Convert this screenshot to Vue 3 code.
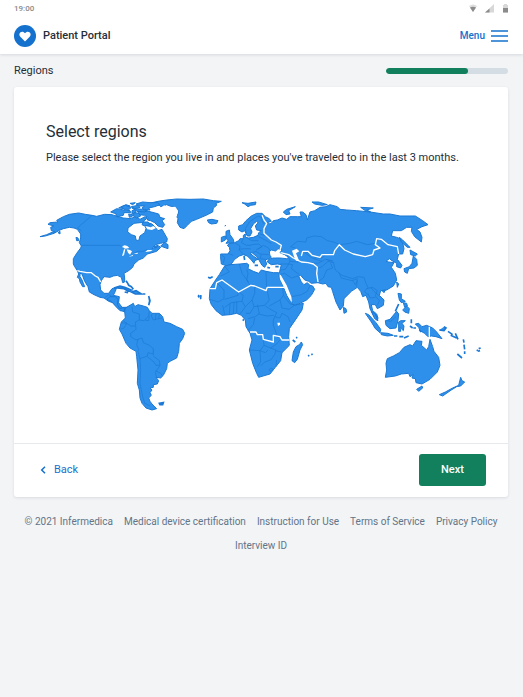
<script setup>
import { ref } from 'vue'

const progress = ref(67)
const links = ['Medical device certification', 'Instruction for Use', 'Terms of Service', 'Privacy Policy', 'Interview ID']
</script>

<template>
  <div class="page">
    <header class="top">
      <div class="status">
        <span>19:00</span>
        <svg class="status-icons" viewBox="0 0 42 12" aria-hidden="true">
          <path d="M1 3Q5 0 9 3L5 9Z" fill="#ddd" />
          <path d="M2 4.500Q5 3 8 4.500L5 9Z" fill="#8b8b8b" />
          <path d="M26 1V9.500H17Z" fill="#d8d8d8" />
          <path d="M21.500 5.500V9.500H17Z" fill="#8b8b8b" />
          <path d="M36 1H39V2H40V9.500H35V2H36Z" fill="#d8d8d8" />
          <path d="M35 5H40V9.500H35Z" fill="#8b8b8b" />
        </svg>
      </div>
      <div class="bar">
        <a class="brand" href="#">
          <svg class="logo" viewBox="0 0 22 22" aria-hidden="true">
            <circle cx="11" cy="11" r="11" fill="#1471cd" />
            <path d="M11 16.400L6.300 11.700C4.900 10.200 5.100 8.200 6.500 7.200C8 6.200 10 6.700 11 8.300C12 6.700 14 6.200 15.500 7.200C16.900 8.200 17.100 10.200 15.700 11.700Z" fill="#fff" />
          </svg>
          <span>Patient Portal</span>
        </a>
        <button class="menu" type="button">
          <span>Menu</span>
          <svg class="burger" viewBox="0 0 17 12" aria-hidden="true">
            <path d="M0 1H17M0 6H17M0 11H17" stroke="#1471cd" stroke-width="1.300" />
          </svg>
        </button>
      </div>
    </header>

    <main class="content">
      <div class="step">
        <span>Regions</span>
        <div class="track" role="progressbar" aria-label="Interview progress" :aria-valuenow="progress">
          <div class="fill" :style="{ width: progress + '%' }"></div>
        </div>
      </div>

      <section class="card">
        <div class="intro">
          <h1>Select regions</h1>
          <p>Please select the region you live in and places you've traveled to in the last 3 months.</p>
        </div>

        <svg class="map" viewBox="117 594 1332 640" role="img" aria-label="World map">
          <!-- North America and Greenland -->
          <g transform="translate(90 570)">
            <path class="land" d="M30 140L50 134L66 127L76 126L64 122L62 112L72 108L54 103L60 98L84 96L80 91L100 80L118 73L146 69L166 73L186 76L200 79L224 73L246 74L262 80L280 84L300 86L318 80L330 88L345 80L352 84L340 94L345 98L330 98L312 100L294 114L293 126L304 134L316 138L318 150L326 152L330 138L344 128L348 116L345 106L352 98L366 102L374 110L384 122L396 118L404 132L412 146L410 156L392 160L376 164L366 176L386 168L392 172L380 184L366 188L352 192L340 204L326 210L312 222L308 232L296 242L282 250L284 264L284 276L278 278L274 262L262 256L250 258L240 262L222 260L214 272L210 284L212 300L222 310L236 310L246 296L260 292L256 304L250 316L268 320L266 338L276 352L290 352L298 362L284 366L270 358L258 346L248 338L236 334L222 324L210 322L192 314L178 306L174 290L164 274L156 252L150 250L150 260L156 270L160 280L164 290L158 290L150 276L148 266L142 262L146 252L142 242L134 230L130 222L130 206L140 190L152 174L154 168L148 158L152 144L152 132L142 118L132 114L118 112L100 116L90 120L72 130L46 138Z" />
            <path class="land" d="M358 40L384 34L410 30L440 27L480 28L520 27L550 32L574 34L558 40L560 46L550 54L548 66L528 76L500 88L484 94L472 106L462 116L450 112L442 98L444 86L440 80L446 66L438 52L420 48L410 44L392 50L388 46L370 44Z" />
            <path class="land" d="M318 42L338 36L360 38L382 38L390 44L374 50L356 54L360 60L344 60L336 54L344 48L330 48ZM266 54L288 44L300 48L286 56ZM300 40L316 38L308 44ZM242 66L260 56L282 60L300 62L302 68L282 68L280 76L264 80L256 76L260 72ZM306 62L316 58L318 68L306 72ZM322 62L346 62L364 66L386 72L390 82L404 86L396 92L404 104L398 112L384 108L374 98L362 92L352 90L354 82L344 76L328 74ZM340 96L354 96L360 104L344 108L336 104ZM392 168L404 158L414 164L414 176L402 172ZM370 170L384 166L378 174ZM138 142L144 144L146 152L140 152ZM84 128L90 124L90 132ZM304 50L324 46L330 52L314 56Z" />
            <path class="land" d="M274 50L286 46L304 52L298 58L282 58ZM306 54L320 56L338 58L352 62L344 66L322 64ZM312 68L326 70L332 78L320 84L310 78ZM296 72L308 74L306 80L298 82Z" />
            <path class="water" d="M274 170L284 166L292 168L298 174L286 176ZM282 178L286 178L282 196L276 198ZM290 178L300 180L306 184L300 194L294 188ZM296 200L310 194L308 198ZM310 190L324 188L322 192ZM346 108L362 112L370 108L378 114L366 120L352 118ZM368 180L352 180L346 186L362 184ZM388 58L402 46L416 52L436 50L444 62L440 80L428 78L412 82L400 72Z" />
            <path class="border" d="M186 76L142 114L154 122M154 166H268L280 172M310 190L324 184H340L352 178M224 324L236 314L244 318L246 334L266 338" />
            <path class="region" d="M142 242L150 244L170 248H184L196 258L204 262L212 276" />
            <path class="island" d="M252 294L270 288L284 292L304 300L296 304L282 296L262 294ZM304 306L318 302L334 312L316 312ZM284 306L294 308M338 312H346M288 272L292 278L296 286L304 290L310 298M356 318L360 332L356 346" />
          </g>

          <!-- Central and South America -->
          <g transform="translate(330 870)">
            <path class="land" d="M0 20L16 20L24 28L22 44L30 56L42 52L44 64L30 62L18 50L4 34L-10 28Z" />
            <path class="land" d="M44 64L46 54L60 46L70 40L74 50L84 44L100 48L112 52L118 62L126 70L148 70L158 80L162 96L180 100L200 110L218 118L224 130L218 146L208 160L206 184L200 204L180 214L172 220L170 236L160 256L152 264L138 262L146 272L142 282L130 284L130 292L120 294L126 300L120 308L124 316L116 324L120 334L126 342L140 356L126 360L108 354L96 340L90 324L88 300L82 280L84 240L80 200L78 184L60 174L48 160L36 132L28 118L34 96L46 84Z" />
            <path class="island" d="M148 340L160 338L158 344L150 344ZM264 18L268 16M270 26L274 24M272 16V20" />
            <path class="border" d="M34 98L50 100L62 108H76M40 92L50 100L42 114L32 118M76 120L62 130V140L78 150L84 148L96 144L100 158L118 166L130 176V194M84 148L80 164L86 178L84 184L90 206L112 198L114 188L130 192M112 200L132 216L138 226H150L148 212L130 198M150 226L136 248L140 262M136 242L152 250L158 258M90 206L92 240L90 280L98 320L104 340L120 348M66 50L68 66L88 72V90L76 96L78 120M88 90L102 92L116 78L118 62M126 72L124 78L130 90L146 86L156 84M138 72L136 88M148 72L146 86M118 78L116 92L104 90" />
          </g>

          <!-- Europe, Asia and Africa -->
          <g transform="translate(570 570)">
            <path class="land" d="M92 192V204L94 222L106 226L112 228L124 222L134 208L148 198L160 194L172 198L184 210L192 220L194 212L204 208L190 198L180 190L186 188L200 200L208 212L216 226L224 232L230 222L226 210L236 206L244 202L240 196L238 184L244 180L256 184L264 176L276 180L270 188L284 194L296 202L290 206L270 204L250 204L236 208L232 216L244 224L262 222L274 224L270 240L268 252L272 268L284 290L300 320L306 340L312 346L330 340L350 330L364 316L374 298L368 288L360 286L352 278L342 284L334 276L326 258L332 256L344 270L356 274L364 280L384 278L398 282L408 280L414 290L424 292L428 305L438 336L450 360L460 348L462 326L484 304L502 292L512 304L518 320L528 316L536 336L540 356L550 376L562 392L564 384L560 372L548 362L544 344L556 344L562 356L580 346L582 330L568 316L572 302L590 300L610 288L620 270L616 250L604 232L612 218L596 216L588 214L598 206L606 212L620 220V230L632 234L636 226L622 208L626 192L638 192L642 176L638 158L630 146L620 142L604 138L608 122L634 122L650 112L666 112L664 124L674 140L694 156L696 142L690 126L680 118L696 110L714 104L698 92L676 78L630 78L600 72L580 72L540 66L500 62L470 60L450 58L442 50L420 44L408 50L390 52L374 62L360 66L356 78L352 90L348 74L338 66L330 66L334 80L322 80L300 80L290 88L276 84L262 90L250 92L246 98L240 102L232 98L244 94L238 86L226 80L216 70L200 70L184 78L168 92L158 104L146 108V120L156 126L164 122L172 138L180 138L186 126L182 116L190 102L200 94L204 98L196 108L200 120L214 122L206 128L204 136L190 142L176 144L166 142V132L160 136V146L150 146L146 152L134 158L120 160L112 166L118 172L120 182L114 192Z" />
            <path class="land" d="M104 228L120 224L150 222L170 220L176 224L174 236L190 244L206 250L214 240L228 244L250 248L266 248L268 262L280 290L290 316L304 340L312 346L340 340L336 360L316 390L298 416L296 440L298 466L276 488L272 512L256 532L240 552L206 562L200 550L188 520L178 480L186 450L180 430L168 410L166 390L154 376L140 370L120 374L96 376L78 362L64 344L58 326L60 296L74 274L88 254L94 244Z" />
            <path class="land" d="M52 90L66 88L84 92L80 100L64 102L56 98ZM108 124L118 120L120 134L130 148L132 158L108 160L114 152L108 144ZM94 142L106 138L106 150L94 156ZM156 38L174 40L198 36L196 44L182 46L174 50L164 42ZM280 66L290 58L316 50L296 62L300 72L288 74ZM366 36L386 36L412 44L396 46L374 42ZM512 52L550 54L530 60L542 66L526 62ZM334 456L338 464L330 480L322 508L314 518L306 512L310 486L318 470L328 464ZM460 352L468 356L470 366L462 370ZM628 142L638 150L654 166L660 172L652 172L634 156ZM660 180L682 192L676 198L662 194ZM670 198L680 208L682 226L672 234L656 236L652 250L644 246L642 236L658 230L666 220ZM620 276L626 282L622 292ZM576 302L586 300L582 308ZM104 108L108 106" />
            <path class="water" d="M306 182L320 176L328 184L318 190L324 204L328 214L318 212L312 200ZM240 188L248 182L258 186L270 194L284 200L266 200L254 202L244 198ZM268 250L274 258L290 286L304 320L306 338L296 320L282 292L270 268ZM262 398H270V404L264 408Z" />
            <path class="border" d="M96 196L104 202L100 220M114 190L130 196M134 158L150 168L148 180L160 192M160 146L154 158L170 166L184 166M146 178L164 176L182 176M172 144L184 152L206 152M184 164L206 162L216 170L198 180M206 140L218 146L244 160M210 132L226 136M170 136L166 116L178 96L204 78L218 84M214 74L216 92L222 102M188 188L198 184L210 192L236 194M204 178L220 166L236 174L240 184M214 194L210 206L226 208M272 222L296 222L300 212L296 202M272 240L286 238L296 222L308 224L304 236L328 254M300 214L326 216M268 254L284 250L304 264L324 258M306 320L334 314L352 304L360 286M302 170L322 154L348 156L350 144L372 138L394 140L412 152L430 156L450 164M302 170L316 174M480 160L500 154L532 164L556 160M480 160L450 164M346 190L370 206L396 214M338 184L360 190L374 204L396 204L406 196M352 218L384 220L406 208L428 212M374 238L396 230L414 214L428 218M382 276L400 264L410 240L428 234L422 220M408 208L430 216L436 240L456 256L488 266L504 260L522 262L528 280L534 292L524 304L534 316M448 250L454 264L486 272L502 266L500 290M488 272L496 284L502 272M530 296L548 292L562 302L556 318L568 332L562 346M534 310L540 324L556 322M542 292L552 304L570 320M104 228L118 246L92 258M148 222L156 250L176 276M170 238L174 250L170 270L180 286M228 244L230 292M80 278L102 300V326L84 336L60 328M104 328L144 316V304M144 304L160 316L156 334L124 338L104 352M98 346L104 374M120 340L118 374M132 336L130 372M140 334V370M156 334L166 350L150 372M166 350L186 330L194 310V288M186 330L192 350L180 370L168 370M192 350L224 346L238 330L232 304M202 344L208 370L196 380L174 386M226 348L238 356L260 368L250 390V406L264 444M278 292L280 316L270 330L238 348M280 316L300 342L312 344M270 330L276 354L298 358L312 346M276 370L294 380L300 396M254 380L270 384L276 370M206 372L230 378L252 376M194 384L190 404L174 422M178 480L210 482L226 488L234 480M220 448L222 466L210 482L212 516L202 530M222 466L242 474L260 462L270 450M242 474L258 480L254 494L242 510L224 516L212 528M256 482L274 486M260 510L258 530M238 538L246 534L248 542L240 544Z" />
            <path class="region" d="M58 296H76L80 278L96 270L146 306L182 286L194 288L228 302L232 292H282M180 426H198L202 434H218L220 448L250 456V436L270 440L276 450H298M216 76L222 90L230 100L222 116V130L244 150L258 156L274 166L270 180M272 188L296 194L310 204L334 216L354 218L370 222L382 232L380 250L384 276M334 198L338 184L354 184L366 196L390 202L396 194L430 194L434 182L448 164L464 180L490 192L526 200L548 194L552 180L570 174L556 164L560 146L574 148L594 164L622 170L626 192" />
            <path class="island" d="M54 262L60 264L68 260M24 318L28 322M32 316V324M158 392L162 388M308 450L316 456M318 444L322 442M354 498L358 496M364 494L368 492M162 198L164 210M194 226L204 226M232 232L240 234M256 230L266 230" />
          </g>

          <!-- Southeast Asia and Oceania -->
          <g transform="translate(990 750)">
            <path class="land" d="M172 326L190 318L208 308L222 292L240 284L248 288L258 272L276 274L274 286L290 300L296 290L300 268L308 290L312 304L326 322L330 346L322 366L300 388L276 402L258 398L256 386L246 384L250 374L240 380L236 370L214 372L196 378L166 382L170 360L168 340Z" />
            <path class="land" d="M106 190L116 194L138 218L152 238L150 248L136 236L124 216ZM124 184L136 192L144 212L134 206ZM166 212L180 208L200 184L206 192L204 212L198 234L180 236L168 226ZM206 216L212 212L226 212L216 220L222 228L220 242L210 232L212 244L206 244ZM152 248L174 250L190 256L172 258L154 254ZM204 130L214 132L214 146L226 154L214 158L208 150ZM218 180L230 168L238 176L236 190L224 186ZM220 158L230 160L232 168L224 172ZM256 222L266 220L276 230L290 226L308 234L320 246L336 266L318 260L304 258L294 260L284 250L270 242L266 232ZM260 418L276 408L278 414L266 424ZM392 382L396 392L404 396L392 408L380 410L364 420L338 438L328 434L346 426L368 414L386 406Z" />
            <path class="region" d="M298 230V266" />
            <path class="island" d="M206 162L196 184M244 208V220M240 228L248 234M192 258H202M208 260H220M222 264L236 258M250 234H258M268 240L274 246M328 240L342 242L348 234L342 230M354 244L368 254M362 256L380 264M376 250L384 268M400 268L402 278M402 284L404 298M404 304V312M382 312L396 324M440 302L444 300M446 296L452 294M444 304L450 302" />
            <path class="border" d="M170 212L182 214L198 200M136 192L142 208" />
          </g>
        </svg>

        <div class="actions">
          <button class="back" type="button">
            <svg class="chevron" viewBox="0 0 6 8" aria-hidden="true">
              <path d="M5 0.700L1.700 4L5 7.300" fill="none" stroke="#1471cd" stroke-width="1.500" />
            </svg>
            <span>Back</span>
          </button>
          <button class="next" type="button">Next</button>
        </div>
      </section>
    </main>

    <footer class="footer">
      <span>© 2021 Infermedica</span>
      <a v-for="link in links" :key="link" href="#">{{ link }}</a>
    </footer>
  </div>
</template>

<style>
body {
  margin: 0;
  background: #f3f4f6;
}
</style>

<style scoped>
.page {
  min-height: 100vh;
  background: #f3f4f6;
  color: #252e38;
  font-family: Roboto, "Liberation Sans", sans-serif;
  font-size: 11px;
  line-height: 16px;
}
button {
  padding: 0;
  border: 0;
  background: none;
  font: inherit;
  cursor: pointer;
}
a {
  color: inherit;
  text-decoration: none;
}
.top {
  background: #fff;
  box-shadow: 0 1px 3px rgba(30, 50, 70, 0.14);
}
.status {
  display: flex;
  justify-content: space-between;
  align-items: center;
  height: 17px;
  padding: 0 13px 0 14px;
  color: #8a8a8a;
  font-size: 8px;
  font-weight: 500;
}
.status-icons {
  width: 42px;
  height: 12px;
}
.bar {
  display: flex;
  justify-content: space-between;
  align-items: center;
  height: 37px;
  padding: 0 15px 0 14px;
}
.brand,
.menu {
  display: flex;
  align-items: center;
  gap: 7px;
  font-weight: 500;
}
.logo {
  width: 22px;
  height: 22px;
}
.menu {
  gap: 6px;
  color: #1471cd;
  font-size: 10px;
}
.burger {
  width: 17px;
  height: 12px;
}
.content {
  padding: 0 15px 0 14px;
}
.step {
  display: flex;
  justify-content: space-between;
  align-items: center;
  height: 33px;
}
.track {
  width: 122px;
  height: 6px;
  border-radius: 3px;
  background: #d5dde4;
  overflow: hidden;
}
.fill {
  height: 100%;
  border-radius: 3px;
  background: #12805c;
}
.card {
  border-radius: 3px;
  background: #fff;
  box-shadow: 0 1px 3px rgba(30, 50, 70, 0.12);
}
.intro {
  padding: 34px 32px 0;
}
h1 {
  margin: 0 0 7px;
  font-size: 16px;
  font-weight: 400;
  line-height: 22px;
}
p {
  margin: 0;
}
.map {
  display: block;
  width: calc(100% - 50px);
  margin: 32px 25px;
}
.land {
  fill: #2e90ea;
  stroke: #1b78d4;
  stroke-width: 3;
  stroke-linejoin: round;
}
.border {
  fill: none;
  stroke: #1b78d4;
  stroke-width: 2;
  stroke-linejoin: round;
}
.region {
  fill: none;
  stroke: #fff;
  stroke-width: 4;
  stroke-linejoin: round;
}
.water {
  fill: #fff;
}
.island {
  fill: #2e90ea;
  stroke: #1b78d4;
  stroke-width: 5;
}
.actions {
  display: flex;
  justify-content: space-between;
  align-items: center;
  padding: 10px 22px 11px 26px;
  border-top: 1px solid #e6eaed;
}
.back {
  display: flex;
  align-items: center;
  gap: 8px;
  color: #1471cd;
}
.chevron {
  width: 6px;
  height: 8px;
}
.next {
  width: 67px;
  height: 32px;
  border-radius: 3px;
  background: #12805c;
  color: #fff;
  font-weight: 500;
}
.footer {
  display: flex;
  flex-wrap: wrap;
  justify-content: center;
  gap: 8px 11px;
  padding: 17px 15px 17px 14px;
  color: #627587;
  font-size: 10px;
}
</style>
